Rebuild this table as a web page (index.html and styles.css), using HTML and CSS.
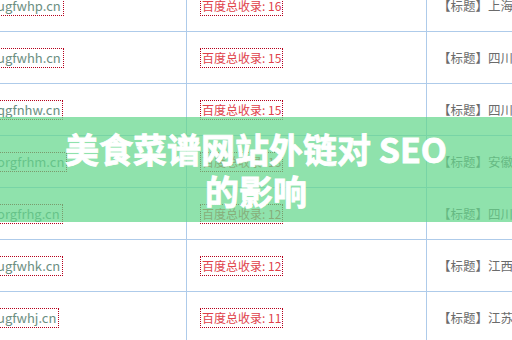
FILE: index.html
```html
<!DOCTYPE html>
<html lang="zh-CN">
<head>
<meta charset="utf-8">
<title>美食菜谱网站外链对 SEO 的影响</title>
<link rel="stylesheet" href="styles.css">
</head>
<body>
<div class="page">
  <div class="table">
    <div class="row">
      <div class="cell c1"><span class="box domain">pugfwhp.cn</span></div>
      <div class="cell c2"><span class="box baidu">百度总收录: 16</span></div>
      <div class="cell c3">【标题】上海网站建设优化推广公司</div>
    </div>
    <div class="row">
      <div class="cell c1"><span class="box domain">pugfwhh.cn</span></div>
      <div class="cell c2"><span class="box baidu">百度总收录: 15</span></div>
      <div class="cell c3">【标题】四川网站建设优化推广公司</div>
    </div>
    <div class="row">
      <div class="cell c1"><span class="box domain">pqgfnhw.cn</span></div>
      <div class="cell c2"><span class="box baidu">百度总收录: 15</span></div>
      <div class="cell c3">【标题】四川网站建设优化推广公司</div>
    </div>
    <div class="row">
      <div class="cell c1"><span class="box domain">porgfrhm.cn</span></div>
      <div class="cell c2"><span class="box baidu">百度总收录: 13</span></div>
      <div class="cell c3">【标题】安徽网站建设优化推广公司</div>
    </div>
    <div class="row">
      <div class="cell c1"><span class="box domain">porgfrhg.cn</span></div>
      <div class="cell c2"><span class="box baidu">百度总收录: 12</span></div>
      <div class="cell c3">【标题】四川网站建设优化推广公司</div>
    </div>
    <div class="row">
      <div class="cell c1"><span class="box domain">pugfwhk.cn</span></div>
      <div class="cell c2"><span class="box baidu">百度总收录: 12</span></div>
      <div class="cell c3">【标题】江西网站建设优化推广公司</div>
    </div>
    <div class="row">
      <div class="cell c1"><span class="box domain">pugfwhj.cn</span></div>
      <div class="cell c2"><span class="box baidu">百度总收录: 11</span></div>
      <div class="cell c3">【标题】江苏网站建设优化推广公司</div>
    </div>
  </div>
  <div class="banner">
    <h1 class="title">美食菜谱网站外链对 SEO<br>的影响</h1>
  </div>
</div>
</body>
</html>
```

FILE: styles.css
```css
html, body {
  margin: 0;
  padding: 0;
  background: #ffffff;
}

.page {
  position: relative;
  width: 512px;
  height: 340px;
  overflow: hidden;
  font-family: "Noto Sans CJK SC", "Noto Sans", sans-serif;
  font-size: 13px;
}

.table {
  margin-top: -20px;
  margin-left: -22px;
  width: 760px;
}

.row {
  display: grid;
  grid-template-columns: 209px 240px 1fr;
  height: 52px;
  box-sizing: border-box;
  border-bottom: 1px solid #aecbea;
}

.cell {
  display: flex;
  align-items: center;
  white-space: nowrap;
  overflow: hidden;
}

.c1 {
  padding-left: 8px;
  border-right: 1px solid #aecbea;
}

.c2 {
  padding-left: 13px;
  border-right: 1px solid #aecbea;
}

.c3 {
  padding-left: 11px;
  color: #6b6b6b;
  font-size: 12.5px;
}

.box {
  display: inline-block;
  line-height: 18px;
  padding: 0 2px;
  border: 1px dotted #b5001c;
}

.domain {
  color: #6c8f82;
}

.baidu {
  color: #e0414a;
  font-size: 12px;
  padding: 0 1px;
}

.banner {
  position: absolute;
  left: 0;
  right: 0;
  top: 117px;
  height: 105px;
  background: rgba(100, 215, 140, 0.72);
  display: flex;
  align-items: center;
  justify-content: center;
}

.title {
  margin: 0;
  color: #ffffff;
  font-family: "Noto Sans CJK SC", "Noto Sans", sans-serif;
  font-weight: 700;
  font-size: 34px;
  line-height: 42px;
  text-align: center;
  -webkit-text-stroke: 0.8px #ffffff;
}
```
